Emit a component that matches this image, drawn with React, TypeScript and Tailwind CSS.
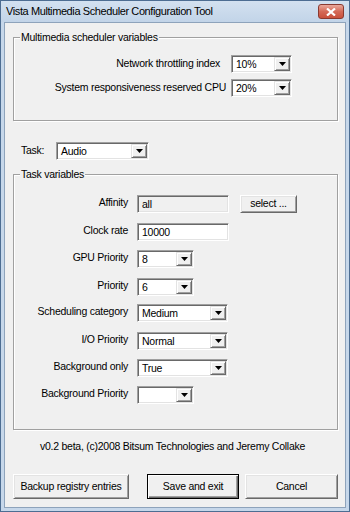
import React from "react";

const font = { fontFamily: '"Liberation Sans", Arial, sans-serif' };

function Arrow() {
  return (
    <div className="flex h-full w-[16px] items-center justify-center border border-t-[#e3e3e3] border-l-[#e3e3e3] border-r-[#696969] border-b-[#696969] bg-[#f0f0f0] shadow-[inset_1px_1px_0_#fff,inset_-1px_-1px_0_#a0a0a0]">
      <svg width="7" height="4" viewBox="0 0 7 4">
        <path d="M0 0h7L3.5 4z" fill="#000" />
      </svg>
    </div>
  );
}

function Combo({ value, w }: { value: string; w: string }) {
  return (
    <div
      className={`flex h-[18px] ${w} border border-t-[#a0a0a0] border-l-[#a0a0a0] border-r-white border-b-white bg-white shadow-[inset_1px_1px_0_#696969,inset_-1px_-1px_0_#e3e3e3] p-[1px]`}
    >
      <div className="flex-1 pl-[3px] text-[10.5px] leading-[14px] tracking-[-0.25px] text-black">{value}</div>
      <Arrow />
    </div>
  );
}

function Field({ value, disabled }: { value: string; disabled?: boolean }) {
  return (
    <div
      className={`h-[18px] w-[92px] border border-t-[#a0a0a0] border-l-[#a0a0a0] border-r-white border-b-white shadow-[inset_1px_1px_0_#696969,inset_-1px_-1px_0_#e3e3e3] pl-[4px] text-[10.5px] leading-[16px] tracking-[-0.25px] ${
        disabled ? "bg-[#f0f0f0]" : "bg-white"
      }`}
    >
      {value}
    </div>
  );
}

function Button({ label, w, isDefault }: { label: string; w: string; isDefault?: boolean }) {
  return (
    <div
      className={`flex h-[25px] ${w} items-center justify-center whitespace-nowrap bg-[#f0f0f0] text-[10.5px] tracking-[-0.25px] ${
        isDefault
          ? "border border-black shadow-[inset_1px_1px_0_#fff,inset_-1px_-1px_0_#696969,inset_-2px_-2px_0_#a0a0a0]"
          : "border border-t-white border-l-white border-r-[#696969] border-b-[#696969] shadow-[inset_1px_1px_0_#e3e3e3,inset_-1px_-1px_0_#a0a0a0]"
      }`}
    >
      {label}
    </div>
  );
}

function Group({ title, h, children }: { title: string; h: string; children: React.ReactNode }) {
  return (
    <div
      className={`relative ${h} w-[325px] border border-[#a0a0a0] shadow-[inset_1px_1px_0_#fff,1px_1px_0_#fff]`}
    >
      <div className="absolute -top-[7px] left-[6px] bg-[#f0f0f0] px-[1px] text-[10.5px] leading-[13px] tracking-[-0.25px]">
        {title}
      </div>
      {children}
    </div>
  );
}

function TaskRow({ label, mt, children }: { label: string; mt: string; children: React.ReactNode }) {
  return (
    <div className={`flex ${mt} h-[18px] items-start`}>
      <div className="w-[114px] whitespace-nowrap text-right text-[10.5px] leading-[14px] tracking-[-0.25px]">{label}</div>
      <div className="ml-[9px] flex items-center">{children}</div>
    </div>
  );
}

export default function App() {
  return (
    <div
      style={font}
      className="flex h-[512px] w-[350px] flex-col border border-[#4d6d92] bg-[#c6d7ea] text-black"
    >
      {/* Title bar */}
      <div className="flex h-[21px] items-center justify-between bg-gradient-to-b from-[#d3e1f0] to-[#c2d4e8] pl-[5px] pr-[5px]">
        <span className="text-[11px] leading-[15px] tracking-[-0.4px] text-black">
          Vista Multimedia Scheduler Configuration Tool
        </span>
        <div className="flex h-[15px] w-[26px] items-center justify-center rounded-[3px] border border-[#8a3a30] bg-gradient-to-b from-[#e9a99c] via-[#d46a58] to-[#c9503c]">
          <svg width="10" height="8" viewBox="0 0 10 8">
            <path d="M1 0.5l8 7M9 0.5l-8 7" stroke="#fff" strokeWidth="2.2" />
          </svg>
        </div>
      </div>

      {/* Client area */}
      <div className="mx-[3px] mb-[3px] flex-1 border border-[#8ea3bb] bg-[#f0f0f0] pl-[8px]">
        <div className="mt-[14px]">
          <Group title="Multimedia scheduler variables" h="h-[84px]">
            <div className="mt-[17px] flex h-[18px] items-center">
              <div className="w-[217px] whitespace-nowrap pr-[11px] text-right text-[10.5px] tracking-[-0.25px]">Network throttling index</div>
              <Combo value="10%" w="w-[61px]" />
            </div>
            <div className="mt-[6px] flex h-[18px] items-center">
              <div className="w-[217px] whitespace-nowrap pr-[5px] text-right text-[10.5px] tracking-[-0.25px]">System responsiveness reserved CPU</div>
              <Combo value="20%" w="w-[61px]" />
            </div>
          </Group>
        </div>

        <div className="mt-[21px] flex h-[18px] items-center">
          <div className="w-[43px] pl-[8px] text-[10.5px] tracking-[-0.25px]">Task:</div>
          <Combo value="Audio" w="w-[93px]" />
        </div>

        <div className="mt-[14px]">
          <Group title="Task variables" h="h-[256px]">
            <TaskRow label="Affinity" mt="mt-[20px]">
              <Field value="all" disabled />
              <div className="ml-[11px]">
                <div className="flex h-[18px] w-[57px] items-center justify-center border border-t-white border-l-white border-r-[#696969] border-b-[#696969] bg-[#f0f0f0] text-[10.5px] tracking-[-0.25px] shadow-[inset_1px_1px_0_#e3e3e3,inset_-1px_-1px_0_#a0a0a0]">
                  select ...
                </div>
              </div>
            </TaskRow>
            <TaskRow label="Clock rate" mt="mt-[10px]">
              <Field value="10000" />
            </TaskRow>
            <TaskRow label="GPU Priority" mt="mt-[9px]">
              <Combo value="8" w="w-[57px]" />
            </TaskRow>
            <TaskRow label="Priority" mt="mt-[10px]">
              <Combo value="6" w="w-[57px]" />
            </TaskRow>
            <TaskRow label="Scheduling category" mt="mt-[8px]">
              <Combo value="Medium" w="w-[91px]" />
            </TaskRow>
            <TaskRow label="I/O Priority" mt="mt-[10px]">
              <Combo value="Normal" w="w-[91px]" />
            </TaskRow>
            <TaskRow label="Background only" mt="mt-[9px]">
              <Combo value="True" w="w-[91px]" />
            </TaskRow>
            <TaskRow label="Background Priority" mt="mt-[9px]">
              <Combo value="" w="w-[57px]" />
            </TaskRow>
          </Group>
        </div>

        <div className="mt-[9px] w-[325px] whitespace-nowrap pr-[6px] text-center text-[10.5px] leading-[14px] tracking-[-0.25px]">
          v0.2 beta, (c)2008 Bitsum Technologies and Jeremy Collake
        </div>

        <div className="mt-[21px] flex">
          <Button label="Backup registry entries" w="w-[116px]" />
          <div className="ml-[18px]">
            <Button label="Save and exit" w="w-[92px]" isDefault />
          </div>
          <div className="ml-[6px]">
            <Button label="Cancel" w="w-[93px]" />
          </div>
        </div>
      </div>
    </div>
  );
}
